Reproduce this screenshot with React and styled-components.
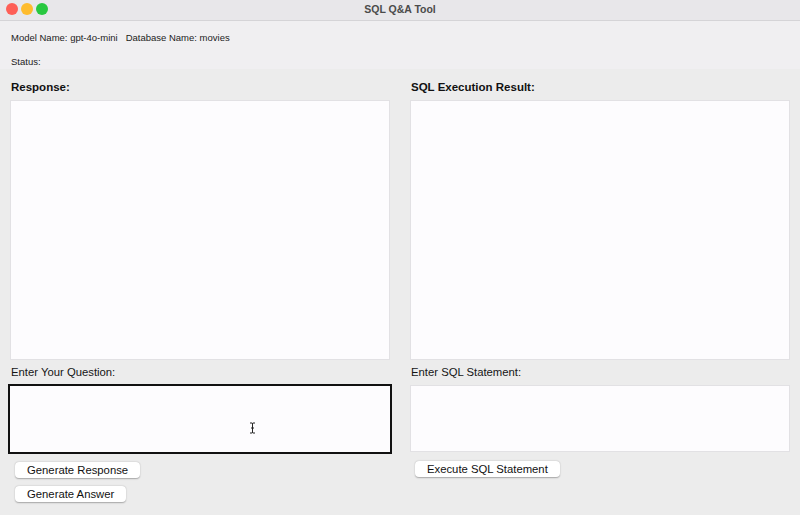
import React from 'react';
import styled, { createGlobalStyle } from 'styled-components';

const GlobalStyle = createGlobalStyle`
    html, body {
        margin: 0;
        padding: 0;
        background: #ececec;
        font-family: "Liberation Sans", Arial, sans-serif;
        color: #1a1a1a;
    }
`;

// Window chrome
const Window = styled.div`
    width: 800px;
    height: 515px;
    display: flex;
    flex-direction: column;
    background: #ececec;
    overflow: hidden;
`;

const TitleBar = styled.div`
    position: relative;
    height: 20px;
    flex: 0 0 20px;
    display: flex;
    align-items: center;
    justify-content: center;
    padding-bottom: 2px;
    box-sizing: border-box;
    height: 21px;
    flex-basis: 21px;
    background: #e8e7ea;
    border-bottom: 1px solid #d5d4d7;
    font-size: 10.5px;
    font-weight: bold;
    color: #4b4b4b;
`;

const Lights = styled.div`
    position: absolute;
    left: 6px;
    top: 3px;
    display: flex;
    gap: 3px;
`;

const Light = styled.span`
    width: 12px;
    height: 12px;
    border-radius: 50%;
    background: ${p => p.color};
`;

const InfoPanel = styled.div`
    height: 41px;
    flex: 0 0 41px;
    background: #f0eff1;
    display: flex;
    flex-direction: column;
    gap: 6px;
    padding: 7px 0 0 11px;
    font-size: 9.5px;
    color: #1c1c1c;
`;

const InfoRow = styled.div`
    height: 18px;
    flex: 0 0 18px;
    display: flex;
    align-items: center;
    gap: 8px;
`;

const Main = styled.div`
    flex: 1;
    display: grid;
    grid-template-columns: 380px 380px;
    column-gap: 20px;
    padding: 9px 10px 0;
`;

const Column = styled.div`
    display: flex;
    flex-direction: column;
`;

const Heading = styled.div`
    height: 18px;
    display: flex;
    align-items: center;
    padding-left: 1px;
    font-size: 11.5px;
    font-weight: bold;
    color: #111;
`;

const OutputBox = styled.div`
    margin-top: 4px;
    height: 258px;
    background: #fdfcfe;
    border: 1px solid #e2e1e4;
`;

const Label = styled.div`
    height: 18px;
    margin-top: 3px;
    display: flex;
    align-items: center;
    padding-left: 1px;
    font-size: 11.3px;
    color: #151515;
`;

const InputBox = styled.div`
    position: relative;
    margin: ${p => p.focused ? '3px -2px 0' : '4px 0 0'};
    height: ${p => p.focused ? '66px' : '65px'};
    background: #fdfcfe;
    border: ${p => p.focused ? '2px solid #111' : '1px solid #e2e1e4'};
`;

const Cursor = styled.svg`
    position: absolute;
    left: 239px;
    top: 36px;
`;

const ButtonStack = styled.div`
    margin-top: ${p => p.top}px;
    display: flex;
    flex-direction: column;
    gap: 8px;
    padding-left: 5px;
`;

const Button = styled.button`
    align-self: flex-start;
    height: 16px;
    padding: 0 12px;
    font-family: "Liberation Sans", Arial, sans-serif;
    font-size: 11.3px;
    line-height: 16px;
    color: #111;
    background: #ffffff;
    border: none;
    border-radius: 4px;
    box-shadow: 0 0.5px 1.5px rgba(0, 0, 0, 0.3);
    cursor: pointer;
`;

const App = () => {
    return (
        <>
            <GlobalStyle />
            <Window>
                <TitleBar>
                    <Lights>
                        <Light color="#fe5f57" />
                        <Light color="#febc2e" />
                        <Light color="#28c840" />
                    </Lights>
                    SQL Q&amp;A Tool
                </TitleBar>
                <InfoPanel>
                    <InfoRow>
                        <span>Model Name: gpt-4o-mini</span>
                        <span>Database Name: movies</span>
                    </InfoRow>
                    <InfoRow>
                        <span>Status:</span>
                    </InfoRow>
                </InfoPanel>
                <Main>
                    <Column>
                        <Heading>Response:</Heading>
                        <OutputBox />
                        <Label>Enter Your Question:</Label>
                        <InputBox focused>
                            <Cursor width="7" height="12" viewBox="0 0 7 12">
                                <path d="M1 1 H3 Q3.5 1 3.5 2 V10 Q3.5 11 3 11 H1 M6 1 H4 Q3.5 1 3.5 2 M3.5 10 Q3.5 11 4 11 H6 M2 6 H5" fill="none" stroke="#222" strokeWidth="1" />
                            </Cursor>
                        </InputBox>
                        <ButtonStack top={8}>
                            <Button>Generate Response</Button>
                            <Button>Generate Answer</Button>
                        </ButtonStack>
                    </Column>
                    <Column>
                        <Heading>SQL Execution Result:</Heading>
                        <OutputBox />
                        <Label>Enter SQL Statement:</Label>
                        <InputBox />
                        <ButtonStack top={9}>
                            <Button>Execute SQL Statement</Button>
                        </ButtonStack>
                    </Column>
                </Main>
            </Window>
        </>
    );
};

export default App;
